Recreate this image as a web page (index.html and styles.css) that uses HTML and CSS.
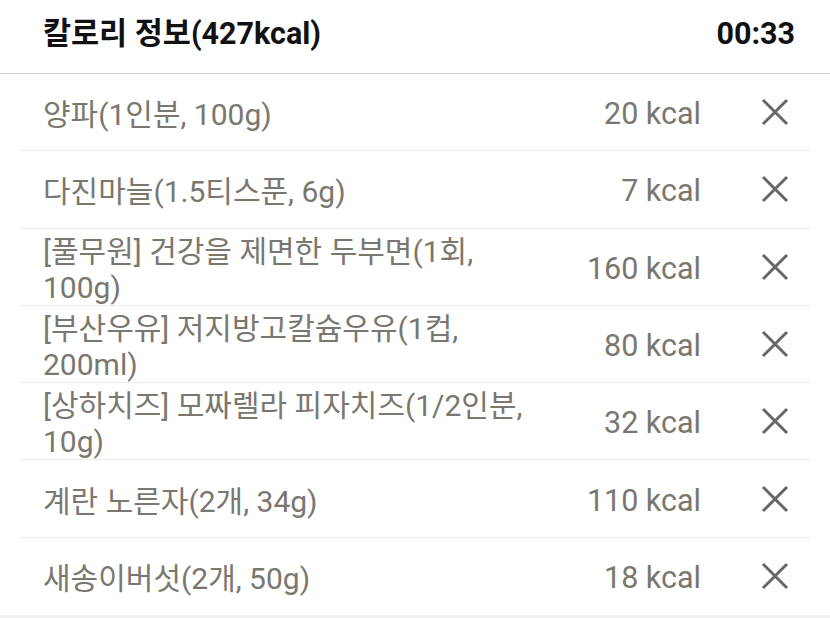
FILE: index.html
```html
<!DOCTYPE html>
<html lang="ko">
<head>
<meta charset="utf-8">
<link rel="stylesheet" href="styles.css">
</head>
<body>
<div class="screen">
  <header class="header">
    <span class="title">칼로리 정보(427kcal)</span>
    <span class="time">00:33</span>
  </header>
  <ul class="list">
    <li class="row"><span class="name">양파(1인분, 100g)</span><span class="kcal">20 kcal</span><span class="del"><svg viewBox="0 0 28 28" width="28" height="28"><path d="M2 2 L26 26 M26 2 L2 26"/></svg></span></li>
    <li class="row"><span class="name">다진마늘(1.5티스푼, 6g)</span><span class="kcal">7 kcal</span><span class="del"><svg viewBox="0 0 28 28" width="28" height="28"><path d="M2 2 L26 26 M26 2 L2 26"/></svg></span></li>
    <li class="row"><span class="name">[풀무원] 건강을 제면한 두부면(1회,<br>100g)</span><span class="kcal">160 kcal</span><span class="del"><svg viewBox="0 0 28 28" width="28" height="28"><path d="M2 2 L26 26 M26 2 L2 26"/></svg></span></li>
    <li class="row"><span class="name">[부산우유] 저지방고칼슘우유(1컵,<br>200ml)</span><span class="kcal">80 kcal</span><span class="del"><svg viewBox="0 0 28 28" width="28" height="28"><path d="M2 2 L26 26 M26 2 L2 26"/></svg></span></li>
    <li class="row"><span class="name">[상하치즈] 모짜렐라 피자치즈(1/2인분,<br>10g)</span><span class="kcal">32 kcal</span><span class="del"><svg viewBox="0 0 28 28" width="28" height="28"><path d="M2 2 L26 26 M26 2 L2 26"/></svg></span></li>
    <li class="row"><span class="name">계란 노른자(2개, 34g)</span><span class="kcal">110 kcal</span><span class="del"><svg viewBox="0 0 28 28" width="28" height="28"><path d="M2 2 L26 26 M26 2 L2 26"/></svg></span></li>
    <li class="row"><span class="name">새송이버섯(2개, 50g)</span><span class="kcal">18 kcal</span><span class="del"><svg viewBox="0 0 28 28" width="28" height="28"><path d="M2 2 L26 26 M26 2 L2 26"/></svg></span></li>
  </ul>
</div>
</body>
</html>
```

FILE: styles.css
```css
html, body {
  margin: 0;
  padding: 0;
  background: #f1f1f1;
}
body {
  font-family: Roboto, "Noto Sans CJK KR", sans-serif;
  width: 830px;
  height: 618px;
  overflow: hidden;
}
.screen {
  background: #ffffff;
  height: 615px;
}
.header {
  height: 74px;
  box-sizing: border-box;
  border-bottom: 1px solid #cfcfcf;
  display: flex;
  align-items: center;
  justify-content: space-between;
  padding: 0 35px 6px 43px;
  font-weight: 700;
  color: #111111;
  font-size: 30.5px;
  line-height: 36px;
}
.header .time {
  font-size: 30.5px;
}
.list {
  list-style: none;
  margin: 0 20px;
  padding: 0;
}
.row {
  height: 77.3px;
  box-sizing: border-box;
  border-bottom: 1px solid #ebebeb;
  display: flex;
  align-items: center;
  padding: 0 21px 0 23px;
  color: #7a776f;
  font-size: 30px;
  line-height: 36px;
}
.row:last-child {
  border-bottom: none;
}
.name {
  flex: 1;
  padding-top: 6px;
}
.kcal {
  font-size: 30.5px;
  white-space: nowrap;
  padding-top: 4px;
}
.del {
  display: flex;
  margin-left: 60px;
  width: 28px;
  height: 28px;
}
.del path {
  stroke: #666666;
  stroke-width: 3;
  fill: none;
}
```
